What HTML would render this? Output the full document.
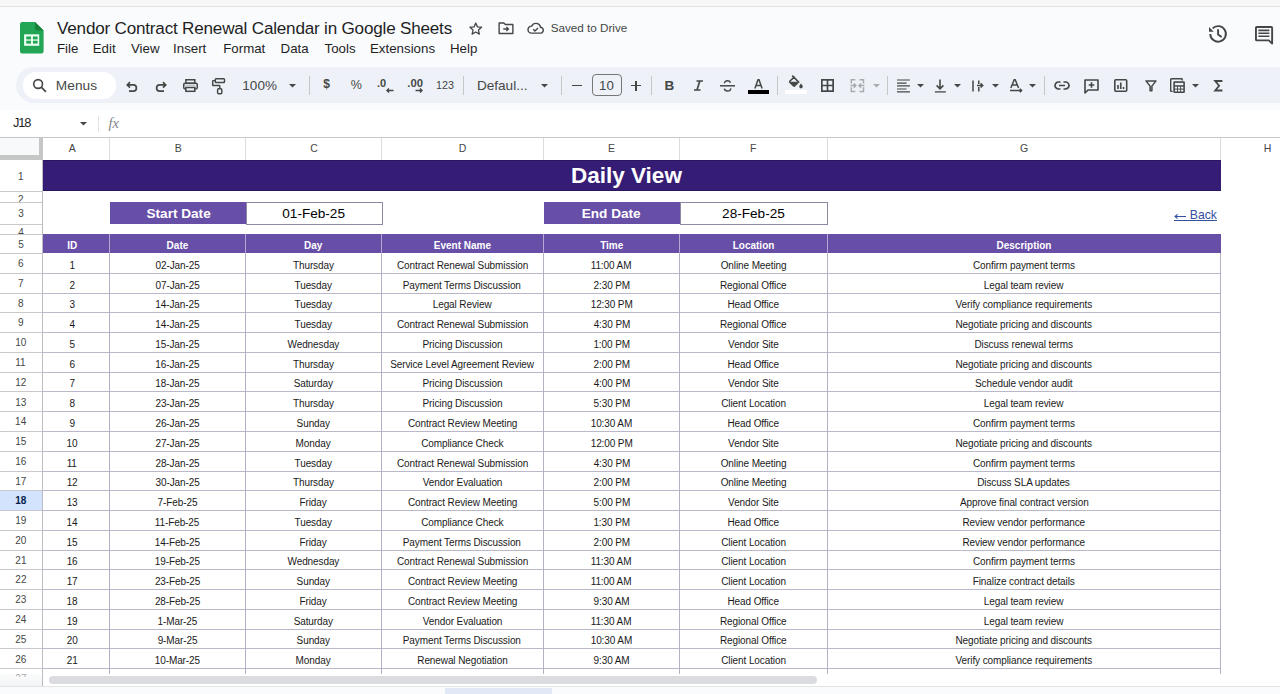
<!DOCTYPE html>
<html><head><meta charset="utf-8">
<style>
*{box-sizing:border-box;margin:0;padding:0}
html,body{width:1280px;height:694px;overflow:hidden}
body{position:relative;background:#f9fbfd;font-family:"Liberation Sans",sans-serif;color:#1f1f1f}
.a{position:absolute}
.t{position:absolute;white-space:nowrap;line-height:1}
svg{position:absolute;overflow:visible}
.ic{fill:none;stroke:#444746;stroke-width:1.8}
.cell{position:absolute;white-space:nowrap;font-size:10px;line-height:1;color:#000;text-align:center}
.hl{position:absolute;background:#bcb8cc;height:1px}
.vl{position:absolute;background:#b4b0c6;width:1px}
</style></head><body>

<div class="a" style="left:0;top:0;width:1280px;height:6px;background:#f7f7f7"></div>
<div class="a" style="left:0;top:6px;width:1280px;height:1px;background:#e3e3e6"></div>
<svg style="left:19.8px;top:21.6px" width="23.6" height="31.5" viewBox="0 0 23.6 31.5">
<path d="M2.2 0H15L23.6 8.4V29.3a2.2 2.2 0 0 1-2.2 2.2H2.2A2.2 2.2 0 0 1 0 29.3V2.2A2.2 2.2 0 0 1 2.2 0Z" fill="#23a556"/>
<path d="M15 0L23.6 8.4H17.2A2.2 2.2 0 0 1 15 6.2Z" fill="#188038"/>
<rect x="4.1" y="12.3" width="15.1" height="11.5" fill="#e8fff0"/>
<rect x="6.3" y="14.5" width="4.7" height="2.9" fill="#23a556"/><rect x="12.9" y="14.5" width="4.7" height="2.9" fill="#23a556"/>
<rect x="6.3" y="18.7" width="4.7" height="2.9" fill="#23a556"/><rect x="12.9" y="18.7" width="4.7" height="2.9" fill="#23a556"/>
</svg>
<div class="t" style="left:57.02px;top:19.72px;font-size:17.1px;font-weight:normal;color:#1f1f1f;letter-spacing:-0.2px">Vendor Contract Renewal Calendar in Google Sheets</div>
<svg style="left:468.2px;top:20.6px" width="15.5" height="15.5" viewBox="0 0 24 24"><path d="M12 3.2l2.6 5.9 6.4.6-4.8 4.3 1.4 6.3L12 17l-5.6 3.3 1.4-6.3L3 9.7l6.4-.6z" fill="none" stroke="#444746" stroke-width="2" stroke-linejoin="round"/></svg>
<svg style="left:497.5px;top:22px" width="16" height="12.5" viewBox="0 0 20 16"><path d="M1.2 1.2h6l2 2h9.6v11.6h-17.6z" fill="none" stroke="#444746" stroke-width="1.8" stroke-linejoin="round"/><path d="M6.5 9h6.5M10.5 6.5L13 9l-2.5 2.5" fill="none" stroke="#444746" stroke-width="1.8"/></svg>
<svg style="left:526.5px;top:22.2px" width="17" height="12" viewBox="0 0 24 17"><path d="M6.2 15.8h12.3a4.2 4.2 0 0 0 .6-8.4A6.6 6.6 0 0 0 6.6 5.8 5 5 0 0 0 6.2 15.8z" fill="none" stroke="#444746" stroke-width="2"/><path d="M8.8 10.4l2.4 2.4 4.4-4.4" fill="none" stroke="#444746" stroke-width="2"/></svg>
<div class="t" style="left:550.67px;top:21.8px;font-size:11.7px;font-weight:normal;color:#444746;">Saved to Drive</div>
<div class="t" style="left:57.01px;top:41.99px;font-size:13.3px;font-weight:normal;color:#1f1f1f;">File</div>
<div class="t" style="left:92.71px;top:41.99px;font-size:13.3px;font-weight:normal;color:#1f1f1f;">Edit</div>
<div class="t" style="left:130.94px;top:41.99px;font-size:13.3px;font-weight:normal;color:#1f1f1f;">View</div>
<div class="t" style="left:173.07px;top:41.99px;font-size:13.3px;font-weight:normal;color:#1f1f1f;">Insert</div>
<div class="t" style="left:223.21px;top:41.99px;font-size:13.3px;font-weight:normal;color:#1f1f1f;">Format</div>
<div class="t" style="left:280.61px;top:41.99px;font-size:13.3px;font-weight:normal;color:#1f1f1f;">Data</div>
<div class="t" style="left:324.5px;top:41.99px;font-size:13.3px;font-weight:normal;color:#1f1f1f;">Tools</div>
<div class="t" style="left:370.01px;top:41.99px;font-size:13.3px;font-weight:normal;color:#1f1f1f;">Extensions</div>
<div class="t" style="left:450.01px;top:41.99px;font-size:13.3px;font-weight:normal;color:#1f1f1f;">Help</div>
<svg style="left:1206px;top:23px" width="24" height="24" viewBox="0 0 24 24"><path d="M4.3 10.9A7.8 7.8 0 1 0 6.58 5.38" fill="none" stroke="#444746" stroke-width="1.9"/><path d="M3 4V8.75H7.75Z" fill="#444746"/><path d="M12.1 6.3V11.4L15.7 14.1" fill="none" stroke="#444746" stroke-width="1.9"/></svg>
<svg style="left:1255px;top:25.8px" width="18.2" height="18" viewBox="0 0 18.2 18"><path d="M1.9 0.95H16.2a0.95 0.95 0 0 1 0.95 0.95V17.6L13.8 14.4H1.9a0.95 0.95 0 0 1-0.95-0.95V1.9a0.95 0.95 0 0 1 0.95-0.95Z" fill="none" stroke="#444746" stroke-width="1.9" stroke-linejoin="round"/><path d="M3.4 4.4H14.4M3.4 7.3H14.4M3.4 10.3H14.4" stroke="#444746" stroke-width="1.6"/></svg>
<div class="a" style="left:16px;top:66.5px;width:1300px;height:36.5px;background:#eef2f8;border-radius:18px"></div>
<div class="a" style="left:22.5px;top:72px;width:93px;height:26.5px;background:#fff;border-radius:13px"></div>
<svg style="left:32px;top:78px" width="15" height="15" viewBox="0 0 15 15"><circle cx="6.1" cy="6" r="4.4" fill="none" stroke="#444746" stroke-width="1.6"/><path d="M9.3 9.2l4.6 4.6" stroke="#444746" stroke-width="1.7"/></svg>
<div class="t" style="left:55.68px;top:78.8px;font-size:13.7px;font-weight:normal;color:#444746;letter-spacing:0.1px">Menus</div>
<svg style="left:125.5px;top:80.5px" width="12" height="11" viewBox="0 0 12 11"><path d="M4 1.2L1.3 3.9 4 6.6M1.6 3.9H7.3a3.1 3.1 0 0 1 0 6.2H3" fill="none" stroke="#444746" stroke-width="1.7"/></svg>
<svg style="left:154.5px;top:80.5px" width="12" height="11" viewBox="0 0 12 11"><path d="M8 1.2L10.7 3.9 8 6.6M10.4 3.9H4.7a3.1 3.1 0 0 0 0 6.2H9" fill="none" stroke="#444746" stroke-width="1.7"/></svg>
<svg style="left:183px;top:79px" width="15" height="13" viewBox="0 0 15 13"><rect x="2.9" y="0.75" width="8.9" height="3.6" fill="none" stroke="#444746" stroke-width="1.5"/><rect x="0.75" y="4.3" width="13.5" height="5.6" rx="1.3" fill="none" stroke="#444746" stroke-width="1.5"/><rect x="2.9" y="8.5" width="8.9" height="3.8" fill="#eef2f8" stroke="#444746" stroke-width="1.5"/><path d="M2.5 6.6H12.5" stroke="#444746" stroke-width="0.6" opacity="0.5"/></svg>
<svg style="left:212px;top:78px" width="13" height="16.5" viewBox="0 0 13 16.5"><rect x="3.3" y="0.7" width="9.2" height="3.8" rx="0.8" fill="none" stroke="#444746" stroke-width="1.45"/><path d="M3.3 2.6H1.2a0.5 0.5 0 0 0-0.5 0.5V6.9a0.5 0.5 0 0 0 0.5 0.5H7.3a0.5 0.5 0 0 1 0.5 0.5V10.8" fill="none" stroke="#444746" stroke-width="1.45"/><rect x="5.6" y="10.8" width="4.2" height="5" rx="1" fill="none" stroke="#444746" stroke-width="1.45"/></svg>
<div class="t" style="left:242.37px;top:79.17px;font-size:13.5px;font-weight:normal;color:#444746;">100%</div>
<svg style="left:289px;top:84px" width="7" height="4" viewBox="0 0 7 4"><path d="M0 0H7L3.5 3.6Z" fill="#444746"/></svg>
<div class="a" style="left:308.5px;top:76px;width:1px;height:18.5px;background:#c7c7c7"></div>
<div class="t" style="left:323.14px;top:78.34px;font-size:12px;font-weight:bold;color:#444746;">$</div>
<div class="t" style="left:350.75px;top:78.62px;font-size:12.5px;font-weight:normal;color:#444746;">%</div>
<div class="t" style="left:377px;top:78px;font-size:11px;font-weight:bold;color:#444746">.0</div>
<svg style="left:386px;top:88px" width="8" height="5" viewBox="0 0 8 5"><path d="M7.5 2.5H1M3 0.5L1 2.5 3 4.5" fill="none" stroke="#444746" stroke-width="1.4"/></svg>
<div class="t" style="left:407.3px;top:77.8px;font-size:11.3px;font-weight:bold;color:#444746">.00</div>
<svg style="left:415px;top:88px" width="8" height="5" viewBox="0 0 8 5"><path d="M0.5 2.5H7M5 0.5L7 2.5 5 4.5" fill="none" stroke="#444746" stroke-width="1.4"/></svg>
<div class="t" style="left:436.08px;top:80.26px;font-size:10.8px;font-weight:normal;color:#444746;">123</div>
<div class="a" style="left:463.2px;top:76px;width:1px;height:18.5px;background:#c7c7c7"></div>
<div class="t" style="left:476.88px;top:78.79px;font-size:13.6px;font-weight:normal;color:#444746;">Defaul...</div>
<svg style="left:541px;top:84px" width="7" height="4" viewBox="0 0 7 4"><path d="M0 0H7L3.5 3.6Z" fill="#444746"/></svg>
<div class="a" style="left:561.1px;top:76px;width:1px;height:18.5px;background:#c7c7c7"></div>
<div class="a" style="left:572px;top:84.8px;width:9.5px;height:1.6px;background:#444746"></div>
<div class="a" style="left:591.6px;top:74px;width:30px;height:21.6px;border:1px solid #747775;border-radius:4px"></div>
<div class="t" style="left:598.99px;top:79.24px;font-size:13.3px;font-weight:normal;color:#444746;">10</div>
<div class="a" style="left:631px;top:84.6px;width:10px;height:1.7px;background:#444746"></div>
<div class="a" style="left:635.2px;top:80.5px;width:1.7px;height:10px;background:#444746"></div>
<div class="a" style="left:651.1px;top:76px;width:1px;height:18.5px;background:#c7c7c7"></div>
<div class="t" style="left:664.5px;top:79px;font-size:13.5px;font-weight:bold;color:#444746">B</div>
<svg style="left:693px;top:79.5px" width="11" height="11" viewBox="0 0 11 11"><path d="M3.5 1H10M1 10H7.5M6.8 1L4 10" fill="none" stroke="#444746" stroke-width="1.7"/></svg>
<svg style="left:720px;top:79.5px" width="15" height="12" viewBox="0 0 15 12"><path d="M0 5.8H15" stroke="#444746" stroke-width="1.5"/><path d="M10.5 2.6C10 1.4 8.9 0.8 7.5 0.8 5.6 0.8 4.4 1.8 4.5 3.2" fill="none" stroke="#444746" stroke-width="1.5"/><path d="M4.3 8.6C4.6 10.2 5.8 11 7.6 11 9.5 11 10.8 10.1 10.7 8.4" fill="none" stroke="#444746" stroke-width="1.5"/></svg>
<svg style="left:753.5px;top:79px" width="9" height="10" viewBox="0 0 9 10"><path d="M0.9 9.6L4 0.8H5L8.1 9.6M2.1 6.5H6.9" fill="none" stroke="#444746" stroke-width="1.5"/></svg>
<div class="a" style="left:748px;top:90.4px;width:21px;height:3.4px;background:#000"></div>
<div class="a" style="left:777px;top:76px;width:1px;height:18.5px;background:#c7c7c7"></div>
<svg style="left:788.5px;top:75px" width="14" height="13" viewBox="0 0 14 13"><path d="M3.2 0.6L5 2.4" stroke="#444746" stroke-width="1.6"/><path d="M5 2.4L9.6 7 5.8 10.8a1 1 0 0 1-1.4 0L1 7.4a1 1 0 0 1 0-1.4z" fill="none" stroke="#444746" stroke-width="1.6"/><path d="M1.4 6.8H9.2L5.8 10.8a1 1 0 0 1-1.4 0z" fill="#444746"/><path d="M12 8.6c0 0 1.8 2 1.8 3a1.8 1.8 0 0 1-3.6 0c0-1 1.8-3 1.8-3z" fill="#444746"/></svg>
<div class="a" style="left:784.7px;top:90px;width:22.3px;height:4px;background:#ffffff"></div>
<svg style="left:820.8px;top:79px" width="13" height="13" viewBox="0 0 13 13"><rect x="0.85" y="0.85" width="11.3" height="11.3" fill="none" stroke="#444746" stroke-width="1.7"/><path d="M6.5 0.8V12.2M0.8 6.5H12.2" stroke="#444746" stroke-width="1.7"/></svg>
<svg style="left:850px;top:78.5px" width="15" height="14" viewBox="0 0 15 14"><path d="M5.3 0.8H1.3V4.6M1.3 8.2V12.6H5.3M9.5 0.8H13.5V4.6M13.5 8.2V12.6H9.5" fill="none" stroke="#a9abad" stroke-width="1.5"/><path d="M0.4 6.6H5.6M3.8 4.6L5.8 6.6 3.8 8.6M14.4 6.6H9.2M11 4.6L9 6.6 11 8.6" fill="none" stroke="#a9abad" stroke-width="1.5"/></svg>
<svg style="left:873px;top:84px" width="7" height="4" viewBox="0 0 7 4"><path d="M0 0H7L3.5 3.6Z" fill="#a9abad"/></svg>
<div class="a" style="left:886.5px;top:76px;width:1px;height:18.5px;background:#c7c7c7"></div>
<svg style="left:896.5px;top:78.7px" width="13" height="14" viewBox="0 0 13 14"><path d="M0 1H12.9M0 4.1H9.5M0 6.9H12.9M0 10H9.5M0 12.8H12.9" stroke="#444746" stroke-width="1.2"/></svg>
<svg style="left:916.6px;top:84px" width="7" height="4" viewBox="0 0 7 4"><path d="M0 0H7L3.5 3.6Z" fill="#444746"/></svg>
<svg style="left:934px;top:78.5px" width="12" height="14" viewBox="0 0 12 14"><path d="M6 0.5V9.8M2.6 6.4L6 9.8 9.4 6.4" fill="none" stroke="#444746" stroke-width="1.6"/><path d="M0.9 12.9H11.8" stroke="#444746" stroke-width="1.3"/></svg>
<svg style="left:954px;top:84px" width="7" height="4" viewBox="0 0 7 4"><path d="M0 0H7L3.5 3.6Z" fill="#444746"/></svg>
<svg style="left:972px;top:79px" width="12" height="13" viewBox="0 0 12 13"><path d="M1 1.4V12.4M6.8 1.4V4.9M6.8 8V12.4" fill="none" stroke="#444746" stroke-width="1.5"/><path d="M5 6.45H10.6M8.6 4.4L10.7 6.45 8.6 8.5" fill="none" stroke="#444746" stroke-width="1.5"/></svg>
<svg style="left:992px;top:84px" width="7" height="4" viewBox="0 0 7 4"><path d="M0 0H7L3.5 3.6Z" fill="#444746"/></svg>
<svg style="left:1010px;top:79px" width="13" height="14" viewBox="0 0 13 14"><path d="M0.8 9L4.2 0.8H5.2L8.6 9M2.2 6H7.2" fill="none" stroke="#444746" stroke-width="1.5"/><path d="M0 11.5H11.5M9.8 9.8L11.6 11.5 9.8 13.2" fill="none" stroke="#444746" stroke-width="1.5"/></svg>
<svg style="left:1029px;top:84px" width="7" height="4" viewBox="0 0 7 4"><path d="M0 0H7L3.5 3.6Z" fill="#444746"/></svg>
<div class="a" style="left:1044.1px;top:76px;width:1px;height:18.5px;background:#c7c7c7"></div>
<svg style="left:1054px;top:81px" width="16" height="9" viewBox="0 0 16 9"><path d="M6.5 1H4.5a3.5 3.5 0 0 0 0 7h2M9.5 1h2a3.5 3.5 0 0 1 0 7h-2M5 4.5H11" fill="none" stroke="#444746" stroke-width="1.7"/></svg>
<svg style="left:1083.5px;top:78.5px" width="15" height="15" viewBox="0 0 15 15"><path d="M1 1H14V11H4L1 14Z" fill="none" stroke="#444746" stroke-width="1.6" stroke-linejoin="round"/><path d="M7.5 3.2V8.8M4.7 6H10.3" stroke="#444746" stroke-width="1.6"/></svg>
<svg style="left:1114px;top:79px" width="13.5" height="13" viewBox="0 0 13.5 13"><rect x="0.8" y="0.8" width="11.9" height="11.4" rx="1" fill="none" stroke="#444746" stroke-width="1.6"/><path d="M4 10V6M6.75 10V3.5M9.5 10V8" stroke="#444746" stroke-width="1.6"/></svg>
<svg style="left:1144.5px;top:79.8px" width="12" height="11.5" viewBox="0 0 12 11.5"><path d="M1 0.9H11L6.9 6.1V10.8H5.1V6.1Z" fill="none" stroke="#444746" stroke-width="1.5" stroke-linejoin="round"/></svg>
<svg style="left:1169.5px;top:77.8px" width="16" height="15.5" viewBox="0 0 16 15.5"><path d="M2.6 13.4H1.3a0.6 0.6 0 0 1-0.6-0.6V1.3a0.6 0.6 0 0 1 0.6-0.6H11.6a0.6 0.6 0 0 1 0.6 0.6V2.6" fill="none" stroke="#444746" stroke-width="1.4"/><rect x="3.3" y="3.3" width="11.6" height="11.6" rx="1.2" fill="#444746"/><rect x="4.9" y="4.9" width="8.4" height="2.3" fill="#eef2f8"/><rect x="4.9" y="8.7" width="2.2" height="1.9" fill="#eef2f8"/><rect x="8" y="8.7" width="2.2" height="1.9" fill="#eef2f8"/><rect x="11.1" y="8.7" width="2.2" height="1.9" fill="#eef2f8"/><rect x="4.9" y="11.6" width="2.2" height="1.9" fill="#eef2f8"/><rect x="8" y="11.6" width="2.2" height="1.9" fill="#eef2f8"/><rect x="11.1" y="11.6" width="2.2" height="1.9" fill="#eef2f8"/></svg>
<svg style="left:1191.5px;top:84px" width="7" height="4" viewBox="0 0 7 4"><path d="M0 0H7L3.5 3.6Z" fill="#444746"/></svg>
<svg style="left:1213.8px;top:80px" width="9" height="11.5" viewBox="0 0 9 11.5"><path d="M8.4 1H1.2L5.1 5.75 1.2 10.5H8.4" fill="none" stroke="#444746" stroke-width="1.8" stroke-linejoin="miter"/></svg>
<div class="a" style="left:0;top:110px;width:1280px;height:27px;background:#fff"></div>
<div class="a" style="left:0;top:137px;width:1280px;height:1px;background:#c4c7c5"></div>
<div class="t" style="left:12.9px;top:116.96px;font-size:12.8px;font-weight:normal;color:#1f1f1f;letter-spacing:-1.1px">J18</div>
<svg style="left:80.2px;top:122.3px" width="7" height="4" viewBox="0 0 7 4"><path d="M0 0H7L3.5 3.6Z" fill="#444746"/></svg>
<div class="a" style="left:98px;top:116.3px;width:1px;height:15.3px;background:#e3e3e3"></div>
<div class="t" style="left:108.5px;top:116px;font-size:14.5px;font-style:italic;color:#80868b;font-family:'Liberation Serif',serif">fx</div>
<div class="a" style="left:0;top:138px;width:1280px;height:548px;background:#fff"></div>
<div class="t" style="left:68.8px;top:143.11px;font-size:10.5px;font-weight:normal;color:#444746;">A</div>
<div class="t" style="left:174.74px;top:143.11px;font-size:10.5px;font-weight:normal;color:#444746;">B</div>
<div class="t" style="left:310.14px;top:143.11px;font-size:10.5px;font-weight:normal;color:#444746;">C</div>
<div class="t" style="left:458.63px;top:143.11px;font-size:10.5px;font-weight:normal;color:#444746;">D</div>
<div class="t" style="left:607.99px;top:143.11px;font-size:10.5px;font-weight:normal;color:#444746;">E</div>
<div class="t" style="left:750.07px;top:143.11px;font-size:10.5px;font-weight:normal;color:#444746;">F</div>
<div class="t" style="left:1020.04px;top:143.11px;font-size:10.5px;font-weight:normal;color:#444746;">G</div>
<div class="t" style="left:1263.81px;top:143.11px;font-size:10.5px;font-weight:normal;color:#444746;">H</div>
<div class="a" style="left:109px;top:138px;width:1px;height:22px;background:#dadce0"></div>
<div class="a" style="left:245px;top:138px;width:1px;height:22px;background:#dadce0"></div>
<div class="a" style="left:381px;top:138px;width:1px;height:22px;background:#dadce0"></div>
<div class="a" style="left:543px;top:138px;width:1px;height:22px;background:#dadce0"></div>
<div class="a" style="left:679px;top:138px;width:1px;height:22px;background:#dadce0"></div>
<div class="a" style="left:827px;top:138px;width:1px;height:22px;background:#dadce0"></div>
<div class="a" style="left:1220px;top:138px;width:1px;height:22px;background:#dadce0"></div>
<div class="a" style="left:0;top:138px;width:39px;height:17px;background:#f8f9fa"></div>
<div class="a" style="left:39px;top:138px;width:4px;height:22px;background:#c4c7c5"></div>
<div class="a" style="left:0;top:155px;width:43px;height:5px;background:#c4c7c5"></div>
<div class="a" style="left:42px;top:160px;width:1px;height:526px;background:#c4c7c5"></div>
<div class="a" style="left:0;top:490px;width:42px;height:20px;background:#d3e3fd"></div>
<div class="a" style="left:0;top:160px;width:42px;height:31px;overflow:hidden"><div class="t" style="left:17.98px;top:11.73px;font-size:10px;font-weight:normal;color:#444746">1</div></div>
<div class="a" style="left:0;top:191px;width:42px;height:1px;background:#c9c9cb"></div>
<div class="a" style="left:0;top:191px;width:42px;height:12px;overflow:hidden"><div class="t" style="left:18.12px;top:4.13px;font-size:10px;font-weight:normal;color:#444746">2</div></div>
<div class="a" style="left:0;top:202px;width:42px;height:1px;background:#c9c9cb"></div>
<div class="a" style="left:0;top:202px;width:42px;height:22px;overflow:hidden"><div class="t" style="left:18.15px;top:7.44px;font-size:10px;font-weight:normal;color:#444746">3</div></div>
<div class="a" style="left:0;top:224px;width:42px;height:1px;background:#c9c9cb"></div>
<div class="a" style="left:0;top:224px;width:42px;height:10px;overflow:hidden"><div class="t" style="left:18.15px;top:3.53px;font-size:10px;font-weight:normal;color:#444746">4</div></div>
<div class="a" style="left:0;top:234px;width:42px;height:1px;background:#c9c9cb"></div>
<div class="a" style="left:0;top:234px;width:42px;height:19px;overflow:hidden"><div class="t" style="left:18.13px;top:5.58px;font-size:10px;font-weight:normal;color:#444746">5</div></div>
<div class="a" style="left:0;top:253px;width:42px;height:1px;background:#c9c9cb"></div>
<div class="a" style="left:0;top:253px;width:42px;height:20px;overflow:hidden"><div class="t" style="left:18.09px;top:6.12px;font-size:10px;font-weight:normal;color:#444746">6</div></div>
<div class="a" style="left:0;top:273px;width:42px;height:1px;background:#c9c9cb"></div>
<div class="a" style="left:0;top:273px;width:42px;height:20px;overflow:hidden"><div class="t" style="left:18.11px;top:5.89px;font-size:10px;font-weight:normal;color:#444746">7</div></div>
<div class="a" style="left:0;top:293px;width:42px;height:1px;background:#c9c9cb"></div>
<div class="a" style="left:0;top:293px;width:42px;height:19px;overflow:hidden"><div class="t" style="left:18.12px;top:5.66px;font-size:10px;font-weight:normal;color:#444746">8</div></div>
<div class="a" style="left:0;top:312px;width:42px;height:1px;background:#c9c9cb"></div>
<div class="a" style="left:0;top:312px;width:42px;height:20px;overflow:hidden"><div class="t" style="left:18.12px;top:6.43px;font-size:10px;font-weight:normal;color:#444746">9</div></div>
<div class="a" style="left:0;top:332px;width:42px;height:1px;background:#c9c9cb"></div>
<div class="a" style="left:0;top:332px;width:42px;height:20px;overflow:hidden"><div class="t" style="left:15.15px;top:6.2px;font-size:10px;font-weight:normal;color:#444746">10</div></div>
<div class="a" style="left:0;top:352px;width:42px;height:1px;background:#c9c9cb"></div>
<div class="a" style="left:0;top:352px;width:42px;height:20px;overflow:hidden"><div class="t" style="left:15.2px;top:5.97px;font-size:10px;font-weight:normal;color:#444746">11</div></div>
<div class="a" style="left:0;top:372px;width:42px;height:1px;background:#c9c9cb"></div>
<div class="a" style="left:0;top:372px;width:42px;height:19px;overflow:hidden"><div class="t" style="left:15.21px;top:5.74px;font-size:10px;font-weight:normal;color:#444746">12</div></div>
<div class="a" style="left:0;top:391px;width:42px;height:1px;background:#c9c9cb"></div>
<div class="a" style="left:0;top:391px;width:42px;height:20px;overflow:hidden"><div class="t" style="left:15.18px;top:6.51px;font-size:10px;font-weight:normal;color:#444746">13</div></div>
<div class="a" style="left:0;top:411px;width:42px;height:1px;background:#c9c9cb"></div>
<div class="a" style="left:0;top:411px;width:42px;height:20px;overflow:hidden"><div class="t" style="left:15.1px;top:6.28px;font-size:10px;font-weight:normal;color:#444746">14</div></div>
<div class="a" style="left:0;top:431px;width:42px;height:1px;background:#c9c9cb"></div>
<div class="a" style="left:0;top:431px;width:42px;height:20px;overflow:hidden"><div class="t" style="left:15.17px;top:6.05px;font-size:10px;font-weight:normal;color:#444746">15</div></div>
<div class="a" style="left:0;top:451px;width:42px;height:1px;background:#c9c9cb"></div>
<div class="a" style="left:0;top:451px;width:42px;height:20px;overflow:hidden"><div class="t" style="left:15.18px;top:5.82px;font-size:10px;font-weight:normal;color:#444746">16</div></div>
<div class="a" style="left:0;top:471px;width:42px;height:1px;background:#c9c9cb"></div>
<div class="a" style="left:0;top:471px;width:42px;height:19px;overflow:hidden"><div class="t" style="left:15.21px;top:5.59px;font-size:10px;font-weight:normal;color:#444746">17</div></div>
<div class="a" style="left:0;top:490px;width:42px;height:1px;background:#c9c9cb"></div>
<div class="a" style="left:0;top:490px;width:42px;height:20px;overflow:hidden"><div class="t" style="left:15.18px;top:6.36px;font-size:10px;font-weight:bold;color:#041e49">18</div></div>
<div class="a" style="left:0;top:510px;width:42px;height:1px;background:#c9c9cb"></div>
<div class="a" style="left:0;top:510px;width:42px;height:20px;overflow:hidden"><div class="t" style="left:15.19px;top:6.13px;font-size:10px;font-weight:normal;color:#444746">19</div></div>
<div class="a" style="left:0;top:530px;width:42px;height:1px;background:#c9c9cb"></div>
<div class="a" style="left:0;top:530px;width:42px;height:20px;overflow:hidden"><div class="t" style="left:15.28px;top:5.9px;font-size:10px;font-weight:normal;color:#444746">20</div></div>
<div class="a" style="left:0;top:550px;width:42px;height:1px;background:#c9c9cb"></div>
<div class="a" style="left:0;top:550px;width:42px;height:19px;overflow:hidden"><div class="t" style="left:15.33px;top:5.67px;font-size:10px;font-weight:normal;color:#444746">21</div></div>
<div class="a" style="left:0;top:569px;width:42px;height:1px;background:#c9c9cb"></div>
<div class="a" style="left:0;top:569px;width:42px;height:20px;overflow:hidden"><div class="t" style="left:15.34px;top:6.44px;font-size:10px;font-weight:normal;color:#444746">22</div></div>
<div class="a" style="left:0;top:589px;width:42px;height:1px;background:#c9c9cb"></div>
<div class="a" style="left:0;top:589px;width:42px;height:20px;overflow:hidden"><div class="t" style="left:15.31px;top:6.21px;font-size:10px;font-weight:normal;color:#444746">23</div></div>
<div class="a" style="left:0;top:609px;width:42px;height:1px;background:#c9c9cb"></div>
<div class="a" style="left:0;top:609px;width:42px;height:20px;overflow:hidden"><div class="t" style="left:15.23px;top:5.98px;font-size:10px;font-weight:normal;color:#444746">24</div></div>
<div class="a" style="left:0;top:629px;width:42px;height:1px;background:#c9c9cb"></div>
<div class="a" style="left:0;top:629px;width:42px;height:19px;overflow:hidden"><div class="t" style="left:15.3px;top:5.75px;font-size:10px;font-weight:normal;color:#444746">25</div></div>
<div class="a" style="left:0;top:648px;width:42px;height:1px;background:#c9c9cb"></div>
<div class="a" style="left:0;top:648px;width:42px;height:20px;overflow:hidden"><div class="t" style="left:15.31px;top:6.52px;font-size:10px;font-weight:normal;color:#444746">26</div></div>
<div class="a" style="left:0;top:668px;width:42px;height:1px;background:#c9c9cb"></div>
<div class="a" style="left:0;top:668px;width:42px;height:9px;overflow:hidden"><div class="t" style="left:15.34px;top:6.29px;font-size:10px;font-weight:normal;color:#444746">27</div></div>
<div class="a" style="left:43px;top:160px;width:1178px;height:31px;background:#351c75;border-top:1px solid #2a1560;border-bottom:1px solid #2a1560"></div>
<div class="t" style="left:570.99px;top:164.95px;font-size:22.5px;font-weight:bold;color:#ffffff;">Daily View</div>
<div class="a" style="left:110px;top:202px;width:136px;height:22px;background:#674ea7"></div>
<div class="t" style="left:146.51px;top:207.39px;font-size:13.6px;font-weight:bold;color:#ffffff;">Start Date</div>
<div class="a" style="left:246px;top:202px;width:137px;height:23px;background:#fff;border:1px solid #8d88a3"></div>
<div class="t" style="left:282.27px;top:207.49px;font-size:13.6px;font-weight:normal;color:#000;">01-Feb-25</div>
<div class="a" style="left:544px;top:202px;width:136px;height:22px;background:#674ea7"></div>
<div class="t" style="left:581.74px;top:207.39px;font-size:13.6px;font-weight:bold;color:#ffffff;">End Date</div>
<div class="a" style="left:680px;top:202px;width:148px;height:23px;background:#fff;border:1px solid #8d88a3"></div>
<div class="t" style="left:722.12px;top:207.49px;font-size:13.6px;font-weight:normal;color:#000;">28-Feb-25</div>
<div class="t" style="left:1189.75px;top:208.77px;font-size:12.2px;font-weight:normal;color:#34509e;">Back</div>
<div class="a" style="left:1174px;top:220px;width:43px;height:1px;background:#34509e"></div>
<svg style="left:1174px;top:214px" width="12" height="5" viewBox="0 0 12 5"><path d="M12 2.5H1.2M3.6 0.4L1 2.5 3.6 4.6" fill="none" stroke="#34509e" stroke-width="1.1"/></svg>
<div class="a" style="left:43px;top:234px;width:1178px;height:19px;background:#674ea7"></div>
<div class="t" style="left:67.18px;top:240.73px;font-size:10px;font-weight:bold;color:#ffffff;">ID</div>
<div class="t" style="left:166.6px;top:240.73px;font-size:10px;font-weight:bold;color:#ffffff;">Date</div>
<div class="t" style="left:304.07px;top:240.73px;font-size:10px;font-weight:bold;color:#ffffff;">Day</div>
<div class="t" style="left:433.81px;top:240.73px;font-size:10px;font-weight:bold;color:#ffffff;">Event Name</div>
<div class="t" style="left:600.14px;top:240.73px;font-size:10px;font-weight:bold;color:#ffffff;">Time</div>
<div class="t" style="left:732.69px;top:240.73px;font-size:10px;font-weight:bold;color:#ffffff;">Location</div>
<div class="t" style="left:996.47px;top:240.73px;font-size:10px;font-weight:bold;color:#ffffff;">Description</div>
<div class="a" style="left:109px;top:234px;width:1px;height:19px;background:#b4a7d6"></div>
<div class="a" style="left:245px;top:234px;width:1px;height:19px;background:#b4a7d6"></div>
<div class="a" style="left:381px;top:234px;width:1px;height:19px;background:#b4a7d6"></div>
<div class="a" style="left:543px;top:234px;width:1px;height:19px;background:#b4a7d6"></div>
<div class="a" style="left:679px;top:234px;width:1px;height:19px;background:#b4a7d6"></div>
<div class="a" style="left:827px;top:234px;width:1px;height:19px;background:#b4a7d6"></div>
<div class="t" style="left:69.38px;top:260.81px;font-size:10px;font-weight:normal;color:#1a1a1a;;letter-spacing:-0.1px">1</div>
<div class="t" style="left:155.5px;top:260.81px;font-size:10px;font-weight:normal;color:#1a1a1a;;letter-spacing:-0.1px">02-Jan-25</div>
<div class="t" style="left:292.96px;top:260.81px;font-size:10px;font-weight:normal;color:#1a1a1a;;letter-spacing:-0.1px">Thursday</div>
<div class="t" style="left:397px;top:260.81px;font-size:10px;font-weight:normal;color:#1a1a1a;;letter-spacing:-0.1px">Contract Renewal Submission</div>
<div class="t" style="left:590.68px;top:260.81px;font-size:10px;font-weight:normal;color:#1a1a1a;;letter-spacing:-0.1px">11:00 AM</div>
<div class="t" style="left:720.66px;top:260.81px;font-size:10px;font-weight:normal;color:#1a1a1a;;letter-spacing:-0.1px">Online Meeting</div>
<div class="t" style="left:972.97px;top:260.81px;font-size:10px;font-weight:normal;color:#1a1a1a;;letter-spacing:-0.1px">Confirm payment terms</div>
<div class="t" style="left:69.52px;top:280.57px;font-size:10px;font-weight:normal;color:#1a1a1a;;letter-spacing:-0.1px">2</div>
<div class="t" style="left:155.5px;top:280.57px;font-size:10px;font-weight:normal;color:#1a1a1a;;letter-spacing:-0.1px">07-Jan-25</div>
<div class="t" style="left:294.57px;top:280.57px;font-size:10px;font-weight:normal;color:#1a1a1a;;letter-spacing:-0.1px">Tuesday</div>
<div class="t" style="left:402.81px;top:280.57px;font-size:10px;font-weight:normal;color:#1a1a1a;;letter-spacing:-0.1px">Payment Terms Discussion</div>
<div class="t" style="left:593.54px;top:280.57px;font-size:10px;font-weight:normal;color:#1a1a1a;;letter-spacing:-0.1px">2:30 PM</div>
<div class="t" style="left:719.88px;top:280.57px;font-size:10px;font-weight:normal;color:#1a1a1a;;letter-spacing:-0.1px">Regional Office</div>
<div class="t" style="left:983.8px;top:280.57px;font-size:10px;font-weight:normal;color:#1a1a1a;;letter-spacing:-0.1px">Legal team review</div>
<div class="t" style="left:69.55px;top:300.34px;font-size:10px;font-weight:normal;color:#1a1a1a;;letter-spacing:-0.1px">3</div>
<div class="t" style="left:155.31px;top:300.34px;font-size:10px;font-weight:normal;color:#1a1a1a;;letter-spacing:-0.1px">14-Jan-25</div>
<div class="t" style="left:294.57px;top:300.34px;font-size:10px;font-weight:normal;color:#1a1a1a;;letter-spacing:-0.1px">Tuesday</div>
<div class="t" style="left:432.71px;top:300.34px;font-size:10px;font-weight:normal;color:#1a1a1a;;letter-spacing:-0.1px">Legal Review</div>
<div class="t" style="left:590.68px;top:300.34px;font-size:10px;font-weight:normal;color:#1a1a1a;;letter-spacing:-0.1px">12:30 PM</div>
<div class="t" style="left:727.46px;top:300.34px;font-size:10px;font-weight:normal;color:#1a1a1a;;letter-spacing:-0.1px">Head Office</div>
<div class="t" style="left:955.58px;top:300.34px;font-size:10px;font-weight:normal;color:#1a1a1a;;letter-spacing:-0.1px">Verify compliance requirements</div>
<div class="t" style="left:69.55px;top:320.12px;font-size:10px;font-weight:normal;color:#1a1a1a;;letter-spacing:-0.1px">4</div>
<div class="t" style="left:155.31px;top:320.12px;font-size:10px;font-weight:normal;color:#1a1a1a;;letter-spacing:-0.1px">14-Jan-25</div>
<div class="t" style="left:294.57px;top:320.12px;font-size:10px;font-weight:normal;color:#1a1a1a;;letter-spacing:-0.1px">Tuesday</div>
<div class="t" style="left:397px;top:320.12px;font-size:10px;font-weight:normal;color:#1a1a1a;;letter-spacing:-0.1px">Contract Renewal Submission</div>
<div class="t" style="left:593.67px;top:320.12px;font-size:10px;font-weight:normal;color:#1a1a1a;;letter-spacing:-0.1px">4:30 PM</div>
<div class="t" style="left:719.88px;top:320.12px;font-size:10px;font-weight:normal;color:#1a1a1a;;letter-spacing:-0.1px">Regional Office</div>
<div class="t" style="left:955.5px;top:320.12px;font-size:10px;font-weight:normal;color:#1a1a1a;;letter-spacing:-0.1px">Negotiate pricing and discounts</div>
<div class="t" style="left:69.53px;top:339.88px;font-size:10px;font-weight:normal;color:#1a1a1a;;letter-spacing:-0.1px">5</div>
<div class="t" style="left:155.31px;top:339.88px;font-size:10px;font-weight:normal;color:#1a1a1a;;letter-spacing:-0.1px">15-Jan-25</div>
<div class="t" style="left:287.53px;top:339.88px;font-size:10px;font-weight:normal;color:#1a1a1a;;letter-spacing:-0.1px">Wednesday</div>
<div class="t" style="left:422.52px;top:339.88px;font-size:10px;font-weight:normal;color:#1a1a1a;;letter-spacing:-0.1px">Pricing Discussion</div>
<div class="t" style="left:593.41px;top:339.88px;font-size:10px;font-weight:normal;color:#1a1a1a;;letter-spacing:-0.1px">1:00 PM</div>
<div class="t" style="left:728.12px;top:339.88px;font-size:10px;font-weight:normal;color:#1a1a1a;;letter-spacing:-0.1px">Vendor Site</div>
<div class="t" style="left:974.48px;top:339.88px;font-size:10px;font-weight:normal;color:#1a1a1a;;letter-spacing:-0.1px">Discuss renewal terms</div>
<div class="t" style="left:69.49px;top:359.66px;font-size:10px;font-weight:normal;color:#1a1a1a;;letter-spacing:-0.1px">6</div>
<div class="t" style="left:155.31px;top:359.66px;font-size:10px;font-weight:normal;color:#1a1a1a;;letter-spacing:-0.1px">16-Jan-25</div>
<div class="t" style="left:292.96px;top:359.66px;font-size:10px;font-weight:normal;color:#1a1a1a;;letter-spacing:-0.1px">Thursday</div>
<div class="t" style="left:390.17px;top:359.66px;font-size:10px;font-weight:normal;color:#1a1a1a;;letter-spacing:-0.1px">Service Level Agreement Review</div>
<div class="t" style="left:593.54px;top:359.66px;font-size:10px;font-weight:normal;color:#1a1a1a;;letter-spacing:-0.1px">2:00 PM</div>
<div class="t" style="left:727.46px;top:359.66px;font-size:10px;font-weight:normal;color:#1a1a1a;;letter-spacing:-0.1px">Head Office</div>
<div class="t" style="left:955.5px;top:359.66px;font-size:10px;font-weight:normal;color:#1a1a1a;;letter-spacing:-0.1px">Negotiate pricing and discounts</div>
<div class="t" style="left:69.51px;top:379.43px;font-size:10px;font-weight:normal;color:#1a1a1a;;letter-spacing:-0.1px">7</div>
<div class="t" style="left:155.31px;top:379.43px;font-size:10px;font-weight:normal;color:#1a1a1a;;letter-spacing:-0.1px">18-Jan-25</div>
<div class="t" style="left:293.67px;top:379.43px;font-size:10px;font-weight:normal;color:#1a1a1a;;letter-spacing:-0.1px">Saturday</div>
<div class="t" style="left:422.52px;top:379.43px;font-size:10px;font-weight:normal;color:#1a1a1a;;letter-spacing:-0.1px">Pricing Discussion</div>
<div class="t" style="left:593.67px;top:379.43px;font-size:10px;font-weight:normal;color:#1a1a1a;;letter-spacing:-0.1px">4:00 PM</div>
<div class="t" style="left:728.12px;top:379.43px;font-size:10px;font-weight:normal;color:#1a1a1a;;letter-spacing:-0.1px">Vendor Site</div>
<div class="t" style="left:975.05px;top:379.43px;font-size:10px;font-weight:normal;color:#1a1a1a;;letter-spacing:-0.1px">Schedule vendor audit</div>
<div class="t" style="left:69.52px;top:399.19px;font-size:10px;font-weight:normal;color:#1a1a1a;;letter-spacing:-0.1px">8</div>
<div class="t" style="left:155.44px;top:399.19px;font-size:10px;font-weight:normal;color:#1a1a1a;;letter-spacing:-0.1px">23-Jan-25</div>
<div class="t" style="left:292.96px;top:399.19px;font-size:10px;font-weight:normal;color:#1a1a1a;;letter-spacing:-0.1px">Thursday</div>
<div class="t" style="left:422.52px;top:399.19px;font-size:10px;font-weight:normal;color:#1a1a1a;;letter-spacing:-0.1px">Pricing Discussion</div>
<div class="t" style="left:593.59px;top:399.19px;font-size:10px;font-weight:normal;color:#1a1a1a;;letter-spacing:-0.1px">5:30 PM</div>
<div class="t" style="left:721.24px;top:399.19px;font-size:10px;font-weight:normal;color:#1a1a1a;;letter-spacing:-0.1px">Client Location</div>
<div class="t" style="left:983.8px;top:399.19px;font-size:10px;font-weight:normal;color:#1a1a1a;;letter-spacing:-0.1px">Legal team review</div>
<div class="t" style="left:69.52px;top:418.96px;font-size:10px;font-weight:normal;color:#1a1a1a;;letter-spacing:-0.1px">9</div>
<div class="t" style="left:155.44px;top:418.96px;font-size:10px;font-weight:normal;color:#1a1a1a;;letter-spacing:-0.1px">26-Jan-25</div>
<div class="t" style="left:296.62px;top:418.96px;font-size:10px;font-weight:normal;color:#1a1a1a;;letter-spacing:-0.1px">Sunday</div>
<div class="t" style="left:407.91px;top:418.96px;font-size:10px;font-weight:normal;color:#1a1a1a;;letter-spacing:-0.1px">Contract Review Meeting</div>
<div class="t" style="left:590.68px;top:418.96px;font-size:10px;font-weight:normal;color:#1a1a1a;;letter-spacing:-0.1px">10:30 AM</div>
<div class="t" style="left:727.46px;top:418.96px;font-size:10px;font-weight:normal;color:#1a1a1a;;letter-spacing:-0.1px">Head Office</div>
<div class="t" style="left:972.97px;top:418.96px;font-size:10px;font-weight:normal;color:#1a1a1a;;letter-spacing:-0.1px">Confirm payment terms</div>
<div class="t" style="left:66.6px;top:438.73px;font-size:10px;font-weight:normal;color:#1a1a1a;;letter-spacing:-0.1px">10</div>
<div class="t" style="left:155.44px;top:438.73px;font-size:10px;font-weight:normal;color:#1a1a1a;;letter-spacing:-0.1px">27-Jan-25</div>
<div class="t" style="left:295.61px;top:438.73px;font-size:10px;font-weight:normal;color:#1a1a1a;;letter-spacing:-0.1px">Monday</div>
<div class="t" style="left:421.13px;top:438.73px;font-size:10px;font-weight:normal;color:#1a1a1a;;letter-spacing:-0.1px">Compliance Check</div>
<div class="t" style="left:590.68px;top:438.73px;font-size:10px;font-weight:normal;color:#1a1a1a;;letter-spacing:-0.1px">12:00 PM</div>
<div class="t" style="left:728.12px;top:438.73px;font-size:10px;font-weight:normal;color:#1a1a1a;;letter-spacing:-0.1px">Vendor Site</div>
<div class="t" style="left:955.5px;top:438.73px;font-size:10px;font-weight:normal;color:#1a1a1a;;letter-spacing:-0.1px">Negotiate pricing and discounts</div>
<div class="t" style="left:66.65px;top:458.5px;font-size:10px;font-weight:normal;color:#1a1a1a;;letter-spacing:-0.1px">11</div>
<div class="t" style="left:155.44px;top:458.5px;font-size:10px;font-weight:normal;color:#1a1a1a;;letter-spacing:-0.1px">28-Jan-25</div>
<div class="t" style="left:294.57px;top:458.5px;font-size:10px;font-weight:normal;color:#1a1a1a;;letter-spacing:-0.1px">Tuesday</div>
<div class="t" style="left:397px;top:458.5px;font-size:10px;font-weight:normal;color:#1a1a1a;;letter-spacing:-0.1px">Contract Renewal Submission</div>
<div class="t" style="left:593.67px;top:458.5px;font-size:10px;font-weight:normal;color:#1a1a1a;;letter-spacing:-0.1px">4:30 PM</div>
<div class="t" style="left:720.66px;top:458.5px;font-size:10px;font-weight:normal;color:#1a1a1a;;letter-spacing:-0.1px">Online Meeting</div>
<div class="t" style="left:972.97px;top:458.5px;font-size:10px;font-weight:normal;color:#1a1a1a;;letter-spacing:-0.1px">Confirm payment terms</div>
<div class="t" style="left:66.66px;top:478.28px;font-size:10px;font-weight:normal;color:#1a1a1a;;letter-spacing:-0.1px">12</div>
<div class="t" style="left:155.5px;top:478.28px;font-size:10px;font-weight:normal;color:#1a1a1a;;letter-spacing:-0.1px">30-Jan-25</div>
<div class="t" style="left:292.96px;top:478.28px;font-size:10px;font-weight:normal;color:#1a1a1a;;letter-spacing:-0.1px">Thursday</div>
<div class="t" style="left:422.84px;top:478.28px;font-size:10px;font-weight:normal;color:#1a1a1a;;letter-spacing:-0.1px">Vendor Evaluation</div>
<div class="t" style="left:593.54px;top:478.28px;font-size:10px;font-weight:normal;color:#1a1a1a;;letter-spacing:-0.1px">2:00 PM</div>
<div class="t" style="left:720.66px;top:478.28px;font-size:10px;font-weight:normal;color:#1a1a1a;;letter-spacing:-0.1px">Online Meeting</div>
<div class="t" style="left:977.15px;top:478.28px;font-size:10px;font-weight:normal;color:#1a1a1a;;letter-spacing:-0.1px">Discuss SLA updates</div>
<div class="t" style="left:66.63px;top:498.05px;font-size:10px;font-weight:normal;color:#1a1a1a;;letter-spacing:-0.1px">13</div>
<div class="t" style="left:157.62px;top:498.05px;font-size:10px;font-weight:normal;color:#1a1a1a;;letter-spacing:-0.1px">7-Feb-25</div>
<div class="t" style="left:299.51px;top:498.05px;font-size:10px;font-weight:normal;color:#1a1a1a;;letter-spacing:-0.1px">Friday</div>
<div class="t" style="left:407.91px;top:498.05px;font-size:10px;font-weight:normal;color:#1a1a1a;;letter-spacing:-0.1px">Contract Review Meeting</div>
<div class="t" style="left:593.59px;top:498.05px;font-size:10px;font-weight:normal;color:#1a1a1a;;letter-spacing:-0.1px">5:00 PM</div>
<div class="t" style="left:728.12px;top:498.05px;font-size:10px;font-weight:normal;color:#1a1a1a;;letter-spacing:-0.1px">Vendor Site</div>
<div class="t" style="left:959.9px;top:498.05px;font-size:10px;font-weight:normal;color:#1a1a1a;;letter-spacing:-0.1px">Approve final contract version</div>
<div class="t" style="left:66.55px;top:517.81px;font-size:10px;font-weight:normal;color:#1a1a1a;;letter-spacing:-0.1px">14</div>
<div class="t" style="left:154.76px;top:517.81px;font-size:10px;font-weight:normal;color:#1a1a1a;;letter-spacing:-0.1px">11-Feb-25</div>
<div class="t" style="left:294.57px;top:517.81px;font-size:10px;font-weight:normal;color:#1a1a1a;;letter-spacing:-0.1px">Tuesday</div>
<div class="t" style="left:421.13px;top:517.81px;font-size:10px;font-weight:normal;color:#1a1a1a;;letter-spacing:-0.1px">Compliance Check</div>
<div class="t" style="left:593.41px;top:517.81px;font-size:10px;font-weight:normal;color:#1a1a1a;;letter-spacing:-0.1px">1:30 PM</div>
<div class="t" style="left:727.46px;top:517.81px;font-size:10px;font-weight:normal;color:#1a1a1a;;letter-spacing:-0.1px">Head Office</div>
<div class="t" style="left:962.48px;top:517.81px;font-size:10px;font-weight:normal;color:#1a1a1a;;letter-spacing:-0.1px">Review vendor performance</div>
<div class="t" style="left:66.62px;top:537.58px;font-size:10px;font-weight:normal;color:#1a1a1a;;letter-spacing:-0.1px">15</div>
<div class="t" style="left:154.76px;top:537.58px;font-size:10px;font-weight:normal;color:#1a1a1a;;letter-spacing:-0.1px">14-Feb-25</div>
<div class="t" style="left:299.51px;top:537.58px;font-size:10px;font-weight:normal;color:#1a1a1a;;letter-spacing:-0.1px">Friday</div>
<div class="t" style="left:402.81px;top:537.58px;font-size:10px;font-weight:normal;color:#1a1a1a;;letter-spacing:-0.1px">Payment Terms Discussion</div>
<div class="t" style="left:593.54px;top:537.58px;font-size:10px;font-weight:normal;color:#1a1a1a;;letter-spacing:-0.1px">2:00 PM</div>
<div class="t" style="left:721.24px;top:537.58px;font-size:10px;font-weight:normal;color:#1a1a1a;;letter-spacing:-0.1px">Client Location</div>
<div class="t" style="left:962.48px;top:537.58px;font-size:10px;font-weight:normal;color:#1a1a1a;;letter-spacing:-0.1px">Review vendor performance</div>
<div class="t" style="left:66.63px;top:557.35px;font-size:10px;font-weight:normal;color:#1a1a1a;;letter-spacing:-0.1px">16</div>
<div class="t" style="left:154.76px;top:557.35px;font-size:10px;font-weight:normal;color:#1a1a1a;;letter-spacing:-0.1px">19-Feb-25</div>
<div class="t" style="left:287.53px;top:557.35px;font-size:10px;font-weight:normal;color:#1a1a1a;;letter-spacing:-0.1px">Wednesday</div>
<div class="t" style="left:397px;top:557.35px;font-size:10px;font-weight:normal;color:#1a1a1a;;letter-spacing:-0.1px">Contract Renewal Submission</div>
<div class="t" style="left:590.68px;top:557.35px;font-size:10px;font-weight:normal;color:#1a1a1a;;letter-spacing:-0.1px">11:30 AM</div>
<div class="t" style="left:721.24px;top:557.35px;font-size:10px;font-weight:normal;color:#1a1a1a;;letter-spacing:-0.1px">Client Location</div>
<div class="t" style="left:972.97px;top:557.35px;font-size:10px;font-weight:normal;color:#1a1a1a;;letter-spacing:-0.1px">Confirm payment terms</div>
<div class="t" style="left:66.66px;top:577.12px;font-size:10px;font-weight:normal;color:#1a1a1a;;letter-spacing:-0.1px">17</div>
<div class="t" style="left:154.89px;top:577.12px;font-size:10px;font-weight:normal;color:#1a1a1a;;letter-spacing:-0.1px">23-Feb-25</div>
<div class="t" style="left:296.62px;top:577.12px;font-size:10px;font-weight:normal;color:#1a1a1a;;letter-spacing:-0.1px">Sunday</div>
<div class="t" style="left:407.91px;top:577.12px;font-size:10px;font-weight:normal;color:#1a1a1a;;letter-spacing:-0.1px">Contract Review Meeting</div>
<div class="t" style="left:590.68px;top:577.12px;font-size:10px;font-weight:normal;color:#1a1a1a;;letter-spacing:-0.1px">11:00 AM</div>
<div class="t" style="left:721.24px;top:577.12px;font-size:10px;font-weight:normal;color:#1a1a1a;;letter-spacing:-0.1px">Client Location</div>
<div class="t" style="left:972.72px;top:577.12px;font-size:10px;font-weight:normal;color:#1a1a1a;;letter-spacing:-0.1px">Finalize contract details</div>
<div class="t" style="left:66.62px;top:596.89px;font-size:10px;font-weight:normal;color:#1a1a1a;;letter-spacing:-0.1px">18</div>
<div class="t" style="left:154.89px;top:596.89px;font-size:10px;font-weight:normal;color:#1a1a1a;;letter-spacing:-0.1px">28-Feb-25</div>
<div class="t" style="left:299.51px;top:596.89px;font-size:10px;font-weight:normal;color:#1a1a1a;;letter-spacing:-0.1px">Friday</div>
<div class="t" style="left:407.91px;top:596.89px;font-size:10px;font-weight:normal;color:#1a1a1a;;letter-spacing:-0.1px">Contract Review Meeting</div>
<div class="t" style="left:593.56px;top:596.89px;font-size:10px;font-weight:normal;color:#1a1a1a;;letter-spacing:-0.1px">9:30 AM</div>
<div class="t" style="left:727.46px;top:596.89px;font-size:10px;font-weight:normal;color:#1a1a1a;;letter-spacing:-0.1px">Head Office</div>
<div class="t" style="left:983.8px;top:596.89px;font-size:10px;font-weight:normal;color:#1a1a1a;;letter-spacing:-0.1px">Legal team review</div>
<div class="t" style="left:66.64px;top:616.66px;font-size:10px;font-weight:normal;color:#1a1a1a;;letter-spacing:-0.1px">19</div>
<div class="t" style="left:157.5px;top:616.66px;font-size:10px;font-weight:normal;color:#1a1a1a;;letter-spacing:-0.1px">1-Mar-25</div>
<div class="t" style="left:293.67px;top:616.66px;font-size:10px;font-weight:normal;color:#1a1a1a;;letter-spacing:-0.1px">Saturday</div>
<div class="t" style="left:422.84px;top:616.66px;font-size:10px;font-weight:normal;color:#1a1a1a;;letter-spacing:-0.1px">Vendor Evaluation</div>
<div class="t" style="left:590.68px;top:616.66px;font-size:10px;font-weight:normal;color:#1a1a1a;;letter-spacing:-0.1px">11:30 AM</div>
<div class="t" style="left:719.88px;top:616.66px;font-size:10px;font-weight:normal;color:#1a1a1a;;letter-spacing:-0.1px">Regional Office</div>
<div class="t" style="left:983.8px;top:616.66px;font-size:10px;font-weight:normal;color:#1a1a1a;;letter-spacing:-0.1px">Legal team review</div>
<div class="t" style="left:66.73px;top:636.43px;font-size:10px;font-weight:normal;color:#1a1a1a;;letter-spacing:-0.1px">20</div>
<div class="t" style="left:157.64px;top:636.43px;font-size:10px;font-weight:normal;color:#1a1a1a;;letter-spacing:-0.1px">9-Mar-25</div>
<div class="t" style="left:296.62px;top:636.43px;font-size:10px;font-weight:normal;color:#1a1a1a;;letter-spacing:-0.1px">Sunday</div>
<div class="t" style="left:402.81px;top:636.43px;font-size:10px;font-weight:normal;color:#1a1a1a;;letter-spacing:-0.1px">Payment Terms Discussion</div>
<div class="t" style="left:590.68px;top:636.43px;font-size:10px;font-weight:normal;color:#1a1a1a;;letter-spacing:-0.1px">10:30 AM</div>
<div class="t" style="left:719.88px;top:636.43px;font-size:10px;font-weight:normal;color:#1a1a1a;;letter-spacing:-0.1px">Regional Office</div>
<div class="t" style="left:955.5px;top:636.43px;font-size:10px;font-weight:normal;color:#1a1a1a;;letter-spacing:-0.1px">Negotiate pricing and discounts</div>
<div class="t" style="left:66.78px;top:656.2px;font-size:10px;font-weight:normal;color:#1a1a1a;;letter-spacing:-0.1px">21</div>
<div class="t" style="left:154.77px;top:656.2px;font-size:10px;font-weight:normal;color:#1a1a1a;;letter-spacing:-0.1px">10-Mar-25</div>
<div class="t" style="left:295.61px;top:656.2px;font-size:10px;font-weight:normal;color:#1a1a1a;;letter-spacing:-0.1px">Monday</div>
<div class="t" style="left:417.27px;top:656.2px;font-size:10px;font-weight:normal;color:#1a1a1a;;letter-spacing:-0.1px">Renewal Negotiation</div>
<div class="t" style="left:593.56px;top:656.2px;font-size:10px;font-weight:normal;color:#1a1a1a;;letter-spacing:-0.1px">9:30 AM</div>
<div class="t" style="left:721.24px;top:656.2px;font-size:10px;font-weight:normal;color:#1a1a1a;;letter-spacing:-0.1px">Client Location</div>
<div class="t" style="left:955.58px;top:656.2px;font-size:10px;font-weight:normal;color:#1a1a1a;;letter-spacing:-0.1px">Verify compliance requirements</div>
<div class="hl" style="left:43px;top:273px;width:1178px"></div>
<div class="hl" style="left:43px;top:293px;width:1178px"></div>
<div class="hl" style="left:43px;top:312px;width:1178px"></div>
<div class="hl" style="left:43px;top:332px;width:1178px"></div>
<div class="hl" style="left:43px;top:352px;width:1178px"></div>
<div class="hl" style="left:43px;top:372px;width:1178px"></div>
<div class="hl" style="left:43px;top:391px;width:1178px"></div>
<div class="hl" style="left:43px;top:411px;width:1178px"></div>
<div class="hl" style="left:43px;top:431px;width:1178px"></div>
<div class="hl" style="left:43px;top:451px;width:1178px"></div>
<div class="hl" style="left:43px;top:471px;width:1178px"></div>
<div class="hl" style="left:43px;top:490px;width:1178px"></div>
<div class="hl" style="left:43px;top:510px;width:1178px"></div>
<div class="hl" style="left:43px;top:530px;width:1178px"></div>
<div class="hl" style="left:43px;top:550px;width:1178px"></div>
<div class="hl" style="left:43px;top:569px;width:1178px"></div>
<div class="hl" style="left:43px;top:589px;width:1178px"></div>
<div class="hl" style="left:43px;top:609px;width:1178px"></div>
<div class="hl" style="left:43px;top:629px;width:1178px"></div>
<div class="hl" style="left:43px;top:648px;width:1178px"></div>
<div class="hl" style="left:43px;top:668px;width:1178px"></div>
<div class="vl" style="left:109px;top:253px;height:421px"></div>
<div class="vl" style="left:245px;top:253px;height:421px"></div>
<div class="vl" style="left:381px;top:253px;height:421px"></div>
<div class="vl" style="left:543px;top:253px;height:421px"></div>
<div class="vl" style="left:679px;top:253px;height:421px"></div>
<div class="vl" style="left:827px;top:253px;height:421px"></div>
<div class="vl" style="left:1220px;top:253px;height:421px"></div>
<div class="a" style="left:42px;top:160px;width:1px;height:526px;background:#bdbcc4"></div>
<div class="a" style="left:0;top:674px;width:42px;height:12px;background:linear-gradient(rgba(248,249,250,0.5),#f1f3f4)"></div>
<div class="a" style="left:43px;top:674px;width:1237px;height:12px;background:#fff"></div>
<div class="a" style="left:48.7px;top:676px;width:768px;height:8px;background:#dadce0;border-radius:4px"></div>
<div class="a" style="left:0;top:686px;width:1280px;height:1px;background:#e3e3e3"></div>
<div class="a" style="left:0;top:687px;width:1280px;height:7px;background:#f9fbfd"></div>
<div class="a" style="left:444.7px;top:688px;width:107px;height:6px;background:#e1e9f7"></div>
</body></html>
